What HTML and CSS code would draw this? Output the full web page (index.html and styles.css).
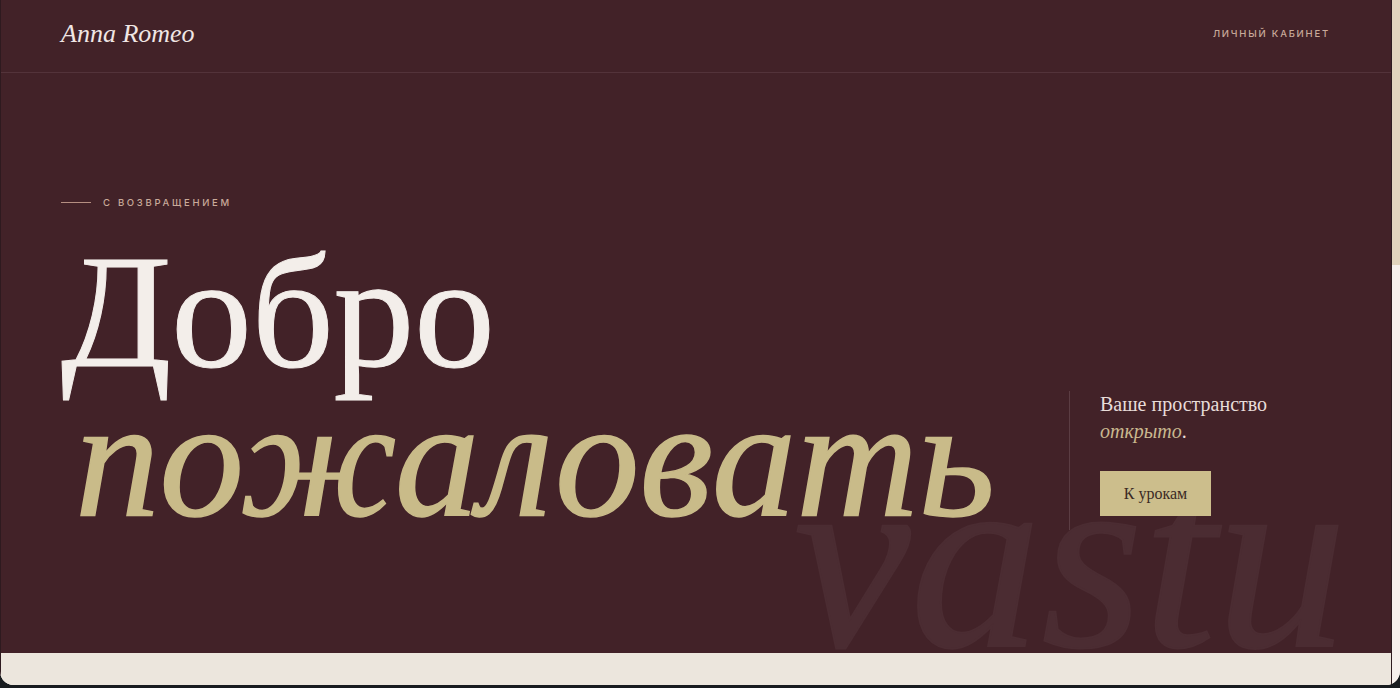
FILE: index.html
```html
<!DOCTYPE html>
<html lang="ru">
<head>
<meta charset="utf-8">
<title>Anna Romeo — Личный кабинет</title>
<link rel="stylesheet" href="styles.css">
</head>
<body>
<div class="window">
  <div class="page">
    <header class="topbar">
      <a class="logo" href="#">Anna Romeo</a>
      <a class="account" href="#">Личный кабинет</a>
    </header>
    <section class="hero">
      <div class="eyebrow"><span class="eyebrow-line"></span><span>С возвращением</span></div>
      <div class="hero-row">
        <h1 class="headline">
          <span class="line-1">Добро</span>
          <span class="line-2">пожаловать</span>
        </h1>
        <aside class="aside">
          <p class="aside-text">Ваше пространство<br><em>открыто</em>.</p>
          <a class="btn" href="#">К урокам</a>
        </aside>
      </div>
      <div class="watermark" aria-hidden="true">vastu</div>
    </section>
    <section class="next"></section>
  </div>
  <div class="scrollbar"><div class="thumb"></div></div>
</div>
</body>
</html>
```
FILE: styles.css
```css
html, body {
  margin: 0;
  padding: 0;
  height: 688px;
  overflow: hidden;
  background: #181c1f;
}

.window {
  display: flex;
  height: 685px;
  border-radius: 0 0 14px 14px;
  overflow: hidden;
  background: #ece6dd;
}

.page {
  flex: 1;
  display: flex;
  flex-direction: column;
  background: #ece6dd;
  border-left: 1px solid #2e1a1f;
}

.topbar {
  height: 72px;
  flex: none;
  display: flex;
  align-items: center;
  justify-content: space-between;
  padding: 0 61px 0 60px;
  background: #422228;
  border-bottom: 1px solid #53333a;
}

.logo {
  font-family: "Liberation Serif", "DejaVu Serif", serif;
  font-style: italic;
  font-size: 26px;
  color: #f0e6e4;
  text-decoration: none;
  margin-top: -4px;
}

.account {
  font-family: "Inter", "Liberation Sans", sans-serif;
  font-size: 9.5px;
  font-weight: 500;
  letter-spacing: 1.8px;
  text-transform: uppercase;
  color: #c9aa9a;
  text-decoration: none;
  margin-top: -6px;
}

.hero {
  position: relative;
  height: 580px;
  flex: none;
  overflow: hidden;
  background: #422228;
  padding: 122px 61px 0 60px;
  box-sizing: border-box;
}

.eyebrow {
  display: flex;
  align-items: center;
  gap: 12px;
  height: 14px;
  font-family: "Inter", "Liberation Sans", sans-serif;
  font-size: 9.5px;
  font-weight: 500;
  letter-spacing: 2.7px;
  text-transform: uppercase;
  color: #c9aa9a;
}

.eyebrow-line {
  width: 30px;
  height: 1px;
  background: #b58f82;
}

.hero-row {
  position: relative;
  z-index: 1;
  display: flex;
  align-items: flex-end;
  justify-content: space-between;
  margin-top: 28px;
}

.headline {
  margin: 0;
  font-family: "Liberation Serif", "DejaVu Serif", serif;
  font-weight: 400;
}

.line-1 {
  display: block;
  font-size: 162px;
  line-height: 150px;
  color: #f3eeea;
  letter-spacing: -0.5px;
  -webkit-text-stroke: 1px #f3eeea;
}

.line-2 {
  display: block;
  font-size: 169px;
  line-height: 150px;
  font-style: italic;
  color: #c9bb89;
  margin-left: 14px;
  margin-top: -4px;
  -webkit-text-stroke: 1.5px #c9bb89;
}

.aside {
  width: 230px;
  border-left: 1px solid #5b3d43;
  padding: 0 0 14px 30px;
  margin-bottom: 3px;
}

.aside-text {
  margin: 0 0 26px;
  font-family: "Liberation Serif", "DejaVu Serif", serif;
  font-size: 20px;
  line-height: 27px;
  color: #e8dcd9;
}

.aside-text em {
  color: #c9b88f;
}

.btn {
  display: inline-block;
  width: 111px;
  height: 45px;
  line-height: 45px;
  text-align: center;
  background: #ccbe8c;
  color: #3a2a24;
  font-family: "Liberation Serif", "DejaVu Serif", serif;
  font-size: 16px;
  text-decoration: none;
}

.watermark {
  position: absolute;
  right: 44px;
  bottom: -36px;
  font-family: "Liberation Serif", "DejaVu Serif", serif;
  font-style: italic;
  font-size: 262px;
  line-height: 1;
  color: #4b2c32;
  -webkit-text-stroke: 2px #4b2c32;
  pointer-events: none;
}

.next {
  flex: 1;
  background: #ece6dd;
}

.scrollbar {
  width: 8px;
  flex: none;
  background: #f6f0ec;
  border-left: 1px solid #2e1c20;
}

.thumb {
  height: 265px;
  background: #e1d4bd;
}
```
